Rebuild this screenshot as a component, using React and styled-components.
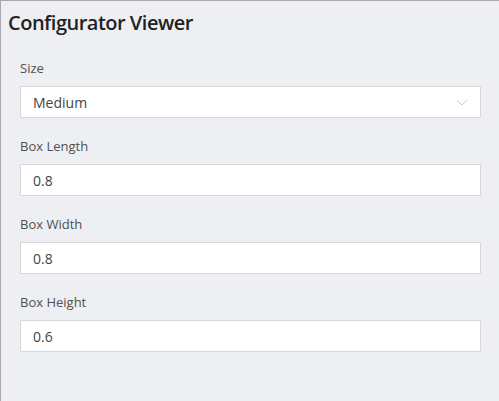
import styled, { createGlobalStyle } from "styled-components";

const GlobalStyle = createGlobalStyle`
    html, body {
        margin: 0;
        padding: 0;
        background: #eeeff3;
    }
    * {
        box-sizing: border-box;
    }
`;

const fields = [
    { label: "Box Length", value: "0.8" },
    { label: "Box Width", value: "0.8" },
    { label: "Box Height", value: "0.6" },
];

const App = () => {
    return (
        <>
            <GlobalStyle />
            <Panel>
                <Title>Configurator Viewer</Title>
                <Form>
                    <Field>
                        <Label>Size</Label>
                        <SelectBox>
                            <span>Medium</span>
                            <svg width="12" height="7" viewBox="0 0 12 7">
                                <path
                                    d="M1 1 L6 6 L11 1"
                                    fill="none"
                                    stroke="#c8c8cc"
                                    strokeWidth="1"
                                />
                            </svg>
                        </SelectBox>
                    </Field>
                    {fields.map((f) => (
                        <Field key={f.label}>
                            <Label>{f.label}</Label>
                            <Input defaultValue={f.value} />
                        </Field>
                    ))}
                </Form>
            </Panel>
        </>
    );
};

const Panel = styled.div`
    width: 499px;
    height: 401px;
    background: #eeeff3;
    border-top: 1px solid #a9a9ad;
    border-left: 1px solid #a9a9ad;
    font-family: "Open Sans", "Liberation Sans", sans-serif;
    overflow: hidden;
`;

const Title = styled.h1`
    margin: 0;
    padding: 8px 0 0 7px;
    font-size: 20px;
    line-height: 28px;
    font-weight: 600;
    letter-spacing: -0.5px;
    color: #222222;
`;

const Form = styled.div`
    display: flex;
    flex-direction: column;
    gap: 19px;
    padding: 22px 18px 0 19px;
`;

const Field = styled.div`
    display: flex;
    flex-direction: column;
`;

const Label = styled.label`
    font-size: 13px;
    line-height: 18px;
    color: #4f4f4f;
    margin-bottom: 9px;
`;

const boxStyle = `
    height: 32px;
    width: 100%;
    background: #ffffff;
    border: 1px solid #d6d6d9;
    border-radius: 1px;
    padding: 0 12px;
    font-family: "Open Sans", "Liberation Sans", sans-serif;
    font-size: 14px;
    color: #444444;
`;

const SelectBox = styled.div`
    ${boxStyle}
    display: flex;
    align-items: center;
    justify-content: space-between;
    padding-right: 12px;
`;

const Input = styled.input`
    ${boxStyle}
    outline: none;
`;

export default App;
